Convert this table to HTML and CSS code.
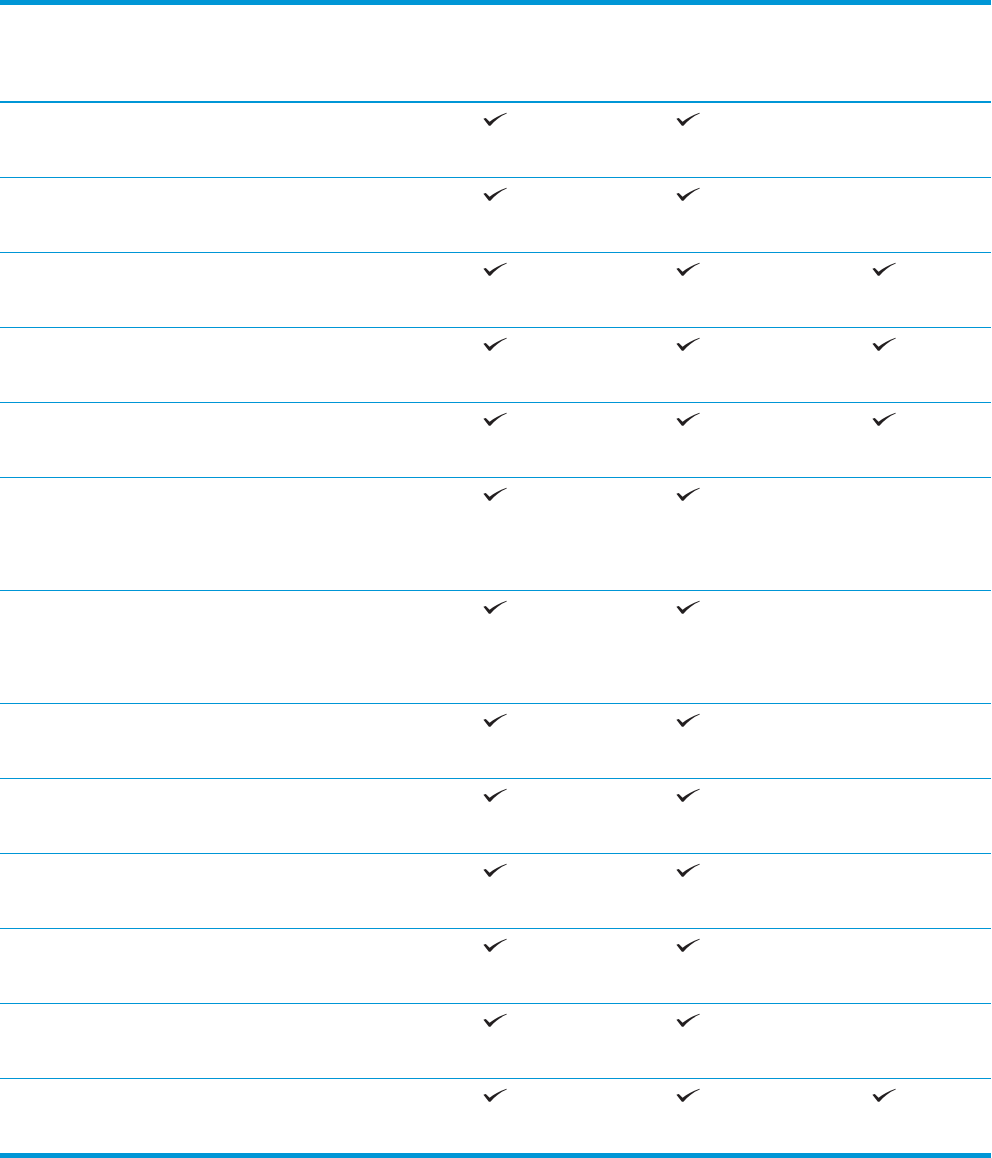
FILE: index.html
```html
<!DOCTYPE html>
<html>
<head>
<meta charset="utf-8">
<link rel="stylesheet" href="styles.css">
</head>
<body>
<div class="table">
  <div class="head"></div>
  <div class="row"><div class="c1"></div><div class="c"><svg class="chk"><use href="#ck"/></svg></div><div class="c"><svg class="chk"><use href="#ck"/></svg></div><div class="c"></div></div>
  <div class="row"><div class="c1"></div><div class="c"><svg class="chk"><use href="#ck"/></svg></div><div class="c"><svg class="chk"><use href="#ck"/></svg></div><div class="c"></div></div>
  <div class="row"><div class="c1"></div><div class="c"><svg class="chk"><use href="#ck"/></svg></div><div class="c"><svg class="chk"><use href="#ck"/></svg></div><div class="c"><svg class="chk"><use href="#ck"/></svg></div></div>
  <div class="row"><div class="c1"></div><div class="c"><svg class="chk"><use href="#ck"/></svg></div><div class="c"><svg class="chk"><use href="#ck"/></svg></div><div class="c"><svg class="chk"><use href="#ck"/></svg></div></div>
  <div class="row"><div class="c1"></div><div class="c"><svg class="chk"><use href="#ck"/></svg></div><div class="c"><svg class="chk"><use href="#ck"/></svg></div><div class="c"><svg class="chk"><use href="#ck"/></svg></div></div>
  <div class="row tall"><div class="c1"></div><div class="c"><svg class="chk"><use href="#ck"/></svg></div><div class="c"><svg class="chk"><use href="#ck"/></svg></div><div class="c"></div></div>
  <div class="row tall"><div class="c1"></div><div class="c"><svg class="chk"><use href="#ck"/></svg></div><div class="c"><svg class="chk"><use href="#ck"/></svg></div><div class="c"></div></div>
  <div class="row"><div class="c1"></div><div class="c"><svg class="chk"><use href="#ck"/></svg></div><div class="c"><svg class="chk"><use href="#ck"/></svg></div><div class="c"></div></div>
  <div class="row"><div class="c1"></div><div class="c"><svg class="chk"><use href="#ck"/></svg></div><div class="c"><svg class="chk"><use href="#ck"/></svg></div><div class="c"></div></div>
  <div class="row"><div class="c1"></div><div class="c"><svg class="chk"><use href="#ck"/></svg></div><div class="c"><svg class="chk"><use href="#ck"/></svg></div><div class="c"></div></div>
  <div class="row"><div class="c1"></div><div class="c"><svg class="chk"><use href="#ck"/></svg></div><div class="c"><svg class="chk"><use href="#ck"/></svg></div><div class="c"></div></div>
  <div class="row"><div class="c1"></div><div class="c"><svg class="chk"><use href="#ck"/></svg></div><div class="c"><svg class="chk"><use href="#ck"/></svg></div><div class="c"></div></div>
  <div class="row last"><div class="c1"></div><div class="c"><svg class="chk"><use href="#ck"/></svg></div><div class="c"><svg class="chk"><use href="#ck"/></svg></div><div class="c"><svg class="chk"><use href="#ck"/></svg></div></div>
</div>
<svg class="defs" width="0" height="0">
  <defs>
    <symbol id="ck" viewBox="0 0 24 14">
      <path d="M0.4 6.8 L2.8 6.1 L6.6 9.8 C11 6.4 16 3.4 23.6 0.8 L23.7 1.6 C17 4.4 12 8.4 7.4 13.8 L5.9 13.8 Z" fill="#231f20"/>
    </symbol>
  </defs>
</svg>
</body>
</html>
```
FILE: styles.css
```css
html, body {
  margin: 0;
  padding: 0;
  background: #ffffff;
  font-family: "Liberation Sans", Arial, sans-serif;
}
.table {
  width: 991px;
  border-top: 5px solid #0096d6;
  border-bottom: 5px solid #0096d6;
  box-sizing: border-box;
}
.head {
  height: 96px;
  border-bottom: 2px solid #0096d6;
}
.row {
  display: grid;
  grid-template-columns: 470px 193px 196px 1fr;
  height: 74px;
  border-bottom: 1px solid #0096d6;
}
.row.tall {
  height: 112px;
}
.row.last {
  border-bottom: none;
}
.c {
  padding: 9px 0 0 13px;
}
.chk {
  display: block;
  width: 24px;
  height: 14px;
}
.defs {
  position: absolute;
  width: 0;
  height: 0;
}
```
